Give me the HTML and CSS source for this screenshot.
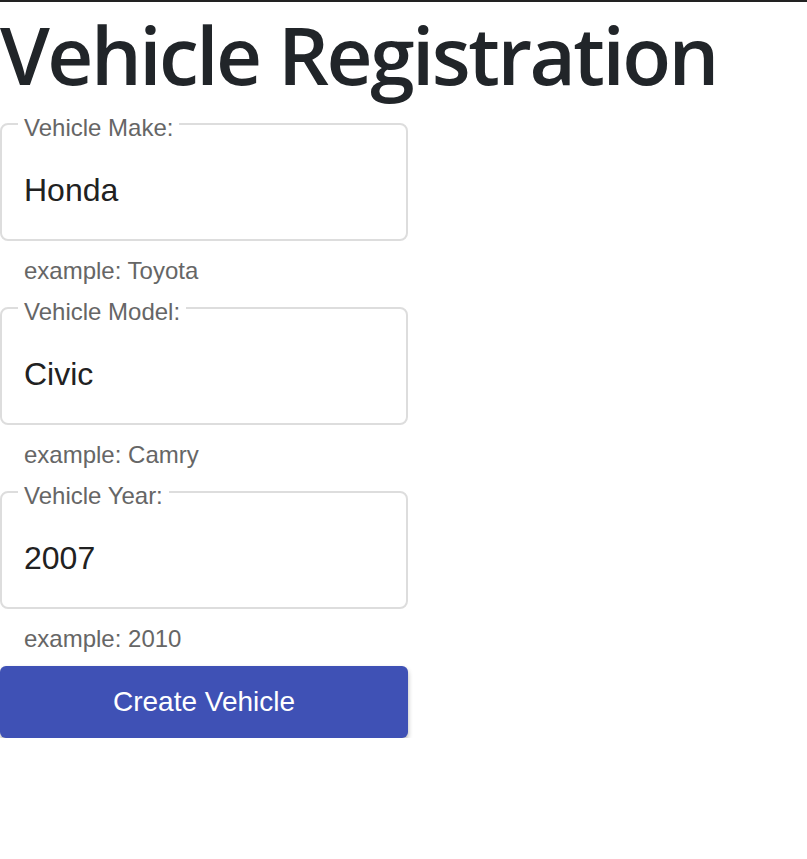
FILE: index.html
```html
<!DOCTYPE html>
<html>
<head>
<meta charset="utf-8">
<link rel="stylesheet" href="styles.css">
</head>
<body>
<div class="topline"></div>
<h1 class="title">Vehicle Registration</h1>
<form class="form">
  <div class="field">
    <fieldset class="box">
      <legend class="legend">Vehicle Make:</legend>
      <div class="value">Honda</div>
    </fieldset>
    <div class="hint">example: Toyota</div>
  </div>
  <div class="field">
    <fieldset class="box">
      <legend class="legend">Vehicle Model:</legend>
      <div class="value">Civic</div>
    </fieldset>
    <div class="hint">example: Camry</div>
  </div>
  <div class="field">
    <fieldset class="box">
      <legend class="legend">Vehicle Year:</legend>
      <div class="value">2007</div>
    </fieldset>
    <div class="hint">example: 2010</div>
  </div>
  <button type="button" class="btn">Create Vehicle</button>
</form>
</body>
</html>
```

FILE: styles.css
```css
html, body {
  margin: 0;
  padding: 0;
  background: #fff;
}
.topline {
  height: 2px;
  background: #222;
}
.title {
  margin: 0;
  font-family: "Open Sans", "Noto Sans", sans-serif;
  font-weight: 600;
  font-size: 80px;
  line-height: 104px;
  color: #212529;
  letter-spacing: -2.5px;
}
.form {
  width: 408px;
  display: flex;
  flex-direction: column;
}
.field {
  display: flex;
  flex-direction: column;
}
.box {
  margin: 0;
  border: 2px solid #ddd;
  border-radius: 8px;
  padding: 0 22px;
}
.legend {
  font-family: "Liberation Sans", Arial, sans-serif;
  font-size: 24px;
  color: #666;
  padding: 8px 6px 0;
  margin-left: -6px;
  line-height: 28px;
}
.value {
  font-family: "Liberation Sans", Arial, sans-serif;
  font-size: 32px;
  color: #212121;
  margin-top: 30px;
  margin-bottom: 30px;
  line-height: 37px;
}
.hint {
  font-family: "Liberation Sans", Arial, sans-serif;
  font-size: 24px;
  color: #666;
  padding: 16px 24px 5px;
  line-height: 28px;
}
.btn {
  margin-top: 8px;
  height: 72px;
  border: none;
  border-radius: 6px;
  background: #3f51b5;
  color: #fff;
  font-family: "Liberation Sans", Arial, sans-serif;
  font-size: 28px;
  box-shadow: 0 3px 5px rgba(0,0,0,0.3);
}
```
